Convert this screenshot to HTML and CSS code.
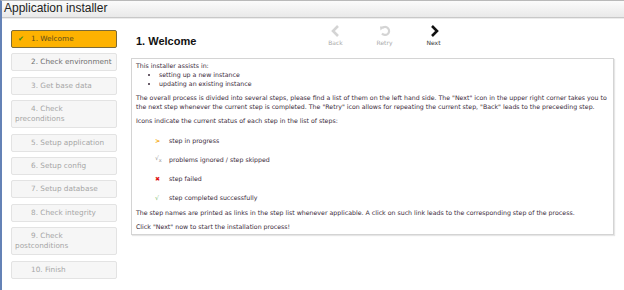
FILE: index.html
```html
<!DOCTYPE html>
<html lang="en">
<head>
    <meta charset="UTF-8">
    <title>Application installer</title>
    <link rel="stylesheet" href="styles.css">
</head>
<body>
    <div class="titlebar">Application installer</div>
    <div class="page">
        <ul class="steps">
            <li class="step current"><span class="tick">&#10004;</span>1. Welcome</li>
            <li class="step open">2. Check environment</li>
            <li class="step">3. Get base data</li>
            <li class="step">4. Check preconditions</li>
            <li class="step">5. Setup application</li>
            <li class="step">6. Setup config</li>
            <li class="step">7. Setup database</li>
            <li class="step">8. Check integrity</li>
            <li class="step">9. Check postconditions</li>
            <li class="step">10. Finish</li>
        </ul>
        <div class="main">
            <div class="head">
                <h1>1. Welcome</h1>
                <div class="tools">
                    <div class="tool off">
                        <svg width="12" height="12" viewBox="0 0 12 12"><path d="M8 1 L3 6 L8 11" fill="none" stroke="#d4d4d4" stroke-width="2.6"/></svg>
                        <span>Back</span>
                    </div>
                    <div class="tool off">
                        <svg width="12" height="12" viewBox="0 0 12 12"><path d="M3.2 3.2 A4 4 0 1 1 3 8.5" fill="none" stroke="#d4d4d4" stroke-width="2.2"/><path d="M1 1.5 L5.5 1.5 L1.5 5.5 Z" fill="#d4d4d4"/></svg>
                        <span>Retry</span>
                    </div>
                    <div class="tool">
                        <svg width="12" height="12" viewBox="0 0 12 12"><path d="M4 1 L9 6 L4 11" fill="none" stroke="#111" stroke-width="2.6"/></svg>
                        <span>Next</span>
                    </div>
                </div>
            </div>
            <div class="content">
                <p class="tight">This installer assists in:</p>
                <ul class="bullets">
                    <li>setting up a new instance</li>
                    <li>updating an existing instance</li>
                </ul>
                <p>The overall process is divided into several steps, please find a list of them on the left hand side. The "Next" icon in the upper right corner takes you to the next step whenever the current step is completed. The "Retry" icon allows for repeating the current step, "Back" leads to the preceeding step.</p>
                <p>Icons indicate the current status of each step in the list of steps:</p>
                <ul class="legend">
                    <li><span class="ico progress">&gt;</span>step in progress</li>
                    <li><span class="ico skipped">&radic;<sub>x</sub></span>problems ignored / step skipped</li>
                    <li><span class="ico failed">&#10006;</span>step failed</li>
                    <li><span class="ico done">&radic;</span>step completed successfully</li>
                </ul>
                <p>The step names are printed as links in the step list whenever applicable. A click on such link leads to the corresponding step of the process.</p>
                <p>Click "Next" now to start the installation process!</p>
            </div>
        </div>
    </div>
</body>
</html>
```

FILE: styles.css
```css
body {
    margin: 0;
    height: 290px;
    border-top: 1px solid #b9b9b9;
    border-left: 2px solid #6482b6;
    box-sizing: border-box;
    background: #fff;
    font-family: "DejaVu Sans", Verdana, sans-serif;
    color: #333;
}
.titlebar {
    height: 16px;
    line-height: 15px;
    padding-left: 2px;
    font-family: "Liberation Sans", Arial, sans-serif;
    font-size: 12px;
    color: #222;
    background: linear-gradient(#fbfbfb, #e9e9e9);
    border-bottom: 1px solid #c8c8c8;
    box-shadow: 0 1px 0 #ececec;
}
.page {
    display: flex;
    padding-top: 12px;
}
.steps {
    list-style: none;
    margin: 0 0 0 9px;
    padding: 0;
    width: 106px;
}
.step {
    box-sizing: border-box;
    min-height: 18px;
    margin-bottom: 5.4px;
    padding: 3px 3px 3px 3px;
    text-indent: 16px;
    font-size: 7.3px;
    line-height: 10px;
    color: #a6a6a6;
    background: #f6f6f6;
    border: 1px solid #e3e3e3;
    border-radius: 2px;
}
.step.open {
    color: #707070;
}
.step.current {
    position: relative;
    color: #5c4a1a;
    background: #fdb201;
    border-color: #7a6a3a;
}
.tick {
    position: absolute;
    left: 6px;
    text-indent: 0;
    color: #3e8a1a;
    font-size: 7px;
}
.main {
    margin-left: 14px;
    width: 483px;
}
.head {
    display: flex;
    align-items: flex-start;
    height: 28px;
}
h1 {
    margin: 5px 0 0 5px;
    width: 175px;
    font-family: "Liberation Sans", Arial, sans-serif;
    font-size: 11px;
    font-weight: bold;
    color: #111;
}
.tools {
    display: flex;
    margin-top: -5px;
}
.tool {
    display: flex;
    flex-direction: column;
    align-items: center;
    width: 49px;
    font-size: 6px;
    color: #333;
}
.tool span {
    margin-top: 2px;
}
.tool.off {
    color: #aaa;
}
.content {
    box-sizing: border-box;
    height: 177px;
    padding: 2px 4px;
    border: 1px solid #d4d4d4;
    box-shadow: 1px 1px 1px #e6e6e6;
    font-size: 6.25px;
    line-height: 9px;
    color: #3a2a3a;
}
.content p {
    margin: 0 0 5px;
}
.content p.tight {
    margin: 0;
}
.bullets {
    margin: 0 0 5px;
    padding-left: 23px;
}
.legend {
    list-style: none;
    margin: 6px 0 1px;
    padding: 0 0 0 19px;
}
.legend li {
    display: flex;
    align-items: center;
    height: 19px;
}
.ico {
    width: 14px;
    font-weight: bold;
}
.progress {
    color: #f5a400;
}
.skipped {
    color: #999;
    font-weight: normal;
    font-size: 6px;
}
.skipped sub {
    font-size: 5px;
}
.failed {
    color: #e01010;
    font-size: 6px;
}
.done {
    color: #8bc47a;
    font-weight: normal;
}
```
